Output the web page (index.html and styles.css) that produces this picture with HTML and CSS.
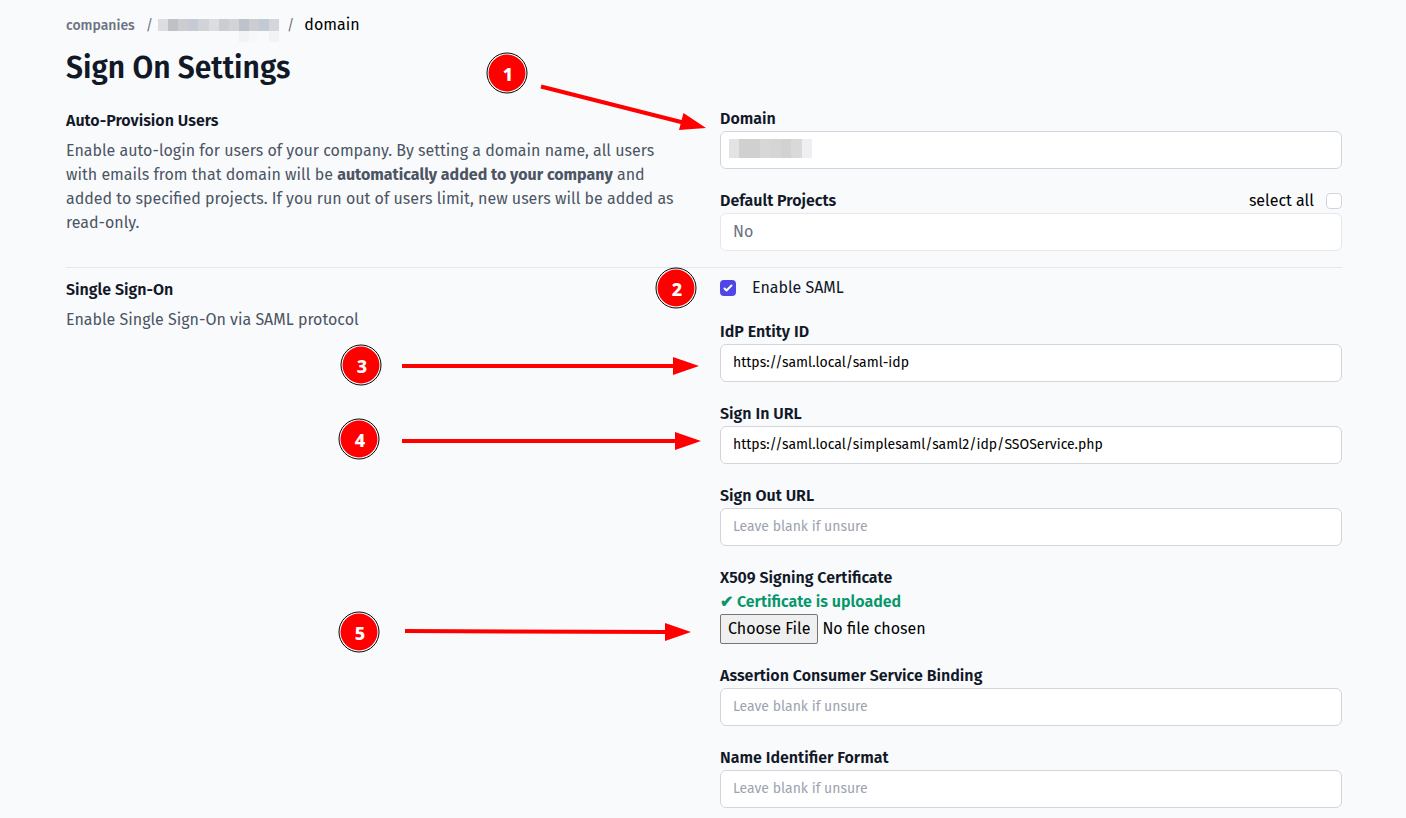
FILE: index.html
```html
<!DOCTYPE html>
<html lang="en">
<head>
<meta charset="utf-8">
<title>Sign On Settings</title>
<link rel="stylesheet" href="styles.css">
</head>
<body>
<main class="page">
  <nav class="crumbs" aria-label="Breadcrumb">
    <a class="crumb-link" href="#">companies</a>
    <span class="slash">/</span>
    <svg class="redacted-crumb" width="121" height="24" viewBox="0 0 121 24" shape-rendering="crispEdges" aria-hidden="true">
      <path fill="#dcdde0" d="M0 1h10v12H0zM51 1h10v12H51z"/>
      <path fill="#bfc1c6" d="M10 1h10v12H10z"/>
      <path fill="#cbcdd1" d="M20 1h10v12H20zM61 1h10v12H61z"/>
      <path fill="#c6cad4" d="M30 1h10v12H30z"/>
      <path fill="#d2d3d7" d="M40 1h11v12H40zM71 1h10v12H71z"/>
      <path fill="#bec3cb" d="M81 1h10v12H81z"/>
      <path fill="#cbcdd2" d="M91 1h10v12H91z"/>
      <path fill="#c4cad3" d="M101 1h10v12h-10z"/>
      <path fill="#d3d6db" d="M111 1h10v12h-10z"/>
      <path fill="#f2f3f5" d="M81 13h10v11H81zM111 13h10v11h-10z"/>
      <path fill="#f7f8fa" d="M91 13h10v11H91z"/>
    </svg>
    <span class="slash slash-last">/</span>
    <span class="crumb-current">domain</span>
  </nav>
  <h1 class="title">Sign On Settings</h1>

  <section class="section">
    <div class="intro">
      <h2 class="intro-title">Auto-Provision Users</h2>
      <p class="intro-text">Enable auto-login for users of your company. By setting a domain name, all users with emails from that domain will be <strong>automatically added to your company</strong> and added to specified projects. If you run out of users limit, new users will be added as read-only.</p>
    </div>
    <div class="fields">
      <div class="field">
        <label class="label" for="domain">Domain</label>
        <div class="redacted-field">
          <input class="input" id="domain" type="text">
          <svg class="redacted-value" width="83" height="19" viewBox="0 0 83 19" shape-rendering="crispEdges" aria-hidden="true">
            <path fill="#e3e3e3" d="M0 0h10v19H0z"/>
            <path fill="#d0d0d0" d="M10 0h21v19H10z"/>
            <path fill="#d7d7d6" d="M31 0h10v19H31z"/>
            <path fill="#d5d5d5" d="M41 0h11v19H41z"/>
            <path fill="#d2d2d2" d="M52 0h10v19H52z"/>
            <path fill="#d9d9d9" d="M62 0h11v19H62z"/>
            <path fill="#efeff1" d="M73 0h10v19H73z"/>
          </svg>
        </div>
      </div>
      <div class="field">
        <div class="label-row">
          <label class="label" for="projects">Default Projects</label>
          <label class="select-all">select all <input class="check" type="checkbox"></label>
        </div>
        <input class="input input-muted" id="projects" type="text" value="No">
      </div>
    </div>
  </section>

  <section class="section section-ruled">
    <div class="intro">
      <h2 class="intro-title">Single Sign-On</h2>
      <p class="intro-text">Enable Single Sign-On via SAML protocol</p>
    </div>
    <div class="fields">
      <label class="enable"><input class="check" type="checkbox" checked> Enable SAML</label>
      <div class="field">
        <label class="label" for="idp">IdP Entity ID</label>
        <input class="input" id="idp" type="text" value="https://saml.local/saml-idp">
      </div>
      <div class="field">
        <label class="label" for="signin">Sign In URL</label>
        <input class="input" id="signin" type="text" value="https://saml.local/simplesaml/saml2/idp/SSOService.php">
      </div>
      <div class="field">
        <label class="label" for="signout">Sign Out URL</label>
        <input class="input" id="signout" type="text" placeholder="Leave blank if unsure">
      </div>
      <div class="field">
        <label class="label" for="cert">X509 Signing Certificate</label>
        <span class="uploaded">✔ Certificate is uploaded</span>
        <input class="file" id="cert" type="file">
      </div>
      <div class="field">
        <label class="label" for="binding">Assertion Consumer Service Binding</label>
        <input class="input" id="binding" type="text" placeholder="Leave blank if unsure">
      </div>
      <div class="field">
        <label class="label" for="format">Name Identifier Format</label>
        <input class="input" id="format" type="text" placeholder="Leave blank if unsure">
      </div>
    </div>
  </section>

  <svg class="callouts" width="720" height="818" viewBox="0 0 720 818">
    <g class="arrows">
      <path d="M541 86.500L683 122.500"/><path class="head" d="M706 128L679 130L683.500 113z"/>
      <path d="M402 366H674"/><path class="head" d="M699 366L673 375V357z"/>
      <path d="M402 441H676"/><path class="head" d="M701 441L675 450V432z"/>
      <path d="M405 631L666 632"/><path class="head" d="M691 632L665 641V623z"/>
    </g>
    <g class="pins">
      <circle class="ring" cx="507" cy="73" r="20"/><circle class="disc" cx="507" cy="73" r="18.500"/><text x="508" y="81">1</text>
      <circle class="ring" cx="676" cy="288" r="20"/><circle class="disc" cx="676" cy="288" r="18.500"/><text x="677" y="296">2</text>
      <circle class="ring" cx="361" cy="365" r="20"/><circle class="disc" cx="361" cy="365" r="18.500"/><text x="362" y="373">3</text>
      <circle class="ring" cx="359" cy="439" r="20"/><circle class="disc" cx="359" cy="439" r="18.500"/><text x="360" y="447">4</text>
      <circle class="ring" cx="359" cy="632" r="20"/><circle class="disc" cx="359" cy="632" r="18.500"/><text x="360" y="640">5</text>
    </g>
  </svg>
</main>
</body>
</html>
```
FILE: styles.css
```css
* { box-sizing: border-box; }
body {
  margin: 0;
  background: #f9fafc;
  color: #000;
  font: 16px/24px "Fira Sans", Roboto, sans-serif;
}
.page { position: relative; padding: 13px 64px 10px 66px; }
.crumbs { display: flex; align-items: center; height: 24px; }
.crumb-link { padding-top: 1px; color: #6b7280; font-size: 14px; font-weight: 500; text-decoration: none; }
.slash { padding-top: 1px; color: #6b7280; font-size: 14px; margin: 0 5px 0 11px; }
.slash-last { margin: 0 10px 0 8px; }
.redacted-crumb { align-self: flex-start; margin-top: 5px; }
.title { margin: 11px 0 0; font-size: 30px; line-height: 40px; font-weight: 600; color: #111827; }
.section { display: grid; grid-template-columns: 1fr 1fr; gap: 32px; padding-top: 19px; }
.section-ruled { margin-top: 16px; padding-top: 8px; border-top: 1px solid #e5e7eb; }
.intro { padding-top: 2px; }
.intro-title { margin: 0 0 6px; font-size: 16px; line-height: 24px; font-weight: 600; color: #111827; }
.intro-text { margin: 0; color: #4b5563; }
.fields { display: flex; flex-direction: column; gap: 20px; }
.field { display: flex; flex-direction: column; }
.label { font-weight: 600; color: #111827; }
.label-row { display: flex; justify-content: space-between; }
.select-all, .enable { display: flex; align-items: center; gap: 12px; }
.enable { gap: 16px; color: #111827; }
.input {
  width: 100%; height: 38px; padding: 7px 12px 9px;
  border: 1px solid #d1d5db; border-radius: 6px; background: #fff;
  font: 14px/20px "Fira Sans", Roboto, sans-serif; color: #000;
}
.input::placeholder { color: #9ca3af; }
.input-muted { border-color: #e5e7eb; color: #6b7280; font-size: 16px; }
.redacted-field { position: relative; display: flex; }
.redacted-value { position: absolute; left: 9px; top: 8px; }
.check {
  appearance: none; width: 16px; height: 16px; margin: 0;
  border: 1px solid #d1d5db; border-radius: 4px; background: #fff;
}
.check:checked {
  border: 0;
  background: #4f46e5 url("data:image/svg+xml,%3csvg viewBox='0 0 16 16' fill='white' xmlns='http://www.w3.org/2000/svg'%3e%3cpath d='M12.207 4.793a1 1 0 010 1.414l-5 5a1 1 0 01-1.414 0l-2-2a1 1 0 011.414-1.414L6.500 9.086l4.293-4.293a1 1 0 011.414 0z'/%3e%3c/svg%3e") center / 100%;
}
.uploaded { color: #059669; font-weight: 600; }
.file { height: 30px; font: 16px/24px "Fira Sans", Roboto, sans-serif; color: #000; }
.file::file-selector-button {
  height: 30px; padding: 1px 7px; margin: 0 4px 0 0;
  border: 1px solid #767676; border-radius: 2px; background: #efefef;
  font: inherit; color: #000;
}
.callouts { position: absolute; left: 0; top: 0; pointer-events: none; }
.arrows path { stroke: #f00; stroke-width: 4; }
.arrows .head { fill: #f00; stroke: none; }
.pins .ring { fill: #fff; stroke: #000; stroke-width: 1; }
.pins .disc { fill: #f00; }
.pins text { fill: #fff; font: 800 18px "Noto Sans", sans-serif; text-anchor: middle; }
```
